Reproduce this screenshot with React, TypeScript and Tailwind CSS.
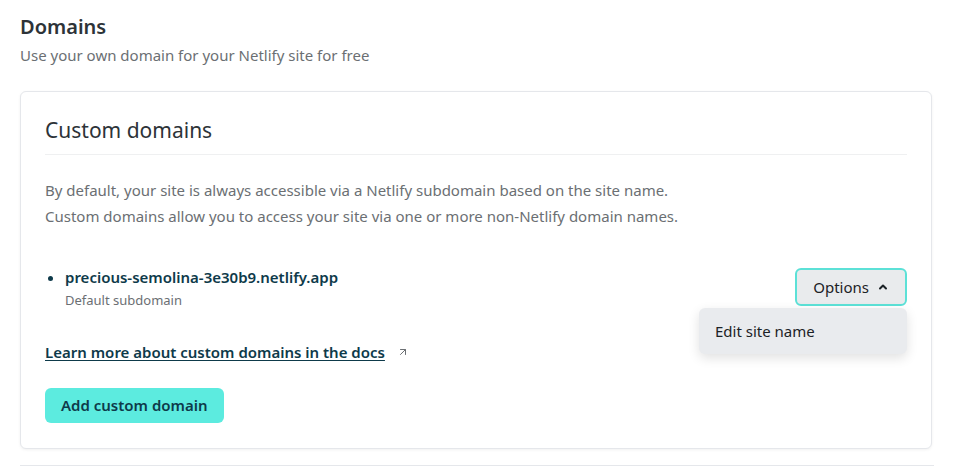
import { ChevronUp, ArrowUpRight } from "lucide-react"

export default function App() {
  return (
    <div
      className="w-[954px] h-[466px] overflow-hidden bg-white px-5 pt-[12px]"
      style={{ fontFamily: '"Noto Sans", "Open Sans", sans-serif' }}
    >
      {/* Section header */}
      <h2 className="text-[20px] leading-[30px] font-semibold text-[#2d3338]">Domains</h2>
      <p className="mt-[1px] text-[15px] leading-[24px] text-[#6b6f73]">
        Use your own domain for your Netlify site for free
      </p>

      {/* Card */}
      <div className="mt-[24px] w-[912px] rounded-[6px] border border-[#e5e7eb] bg-white px-6 pt-[22px] pb-[25px] shadow-[0_1px_3px_rgba(0,0,0,0.06)]">
        <h3 className="text-[21px] leading-[32px] text-[#2d3338]">Custom domains</h3>
        <div className="mt-[8px] border-t border-[#eff0f1]" />

        <div className="mt-[22px] text-[15px] leading-[26px] text-[#6b6f73]">
          <p>By default, your site is always accessible via a Netlify subdomain based on the site name.</p>
          <p>Custom domains allow you to access your site via one or more non-Netlify domain names.</p>
        </div>

        <div className="mt-[36px] flex items-start justify-between">
          <ul className="list-disc pl-5 text-[#0e3a4a]">
            <li className="text-[15px] leading-[24px] font-semibold">
              precious-semolina-3e30b9.netlify.app
              <div className="text-[13px] leading-[22px] font-normal text-[#6b6f73]">Default subdomain</div>
            </li>
          </ul>

          <div className="relative mt-[3px]">
            <button className="flex h-[38px] items-center gap-2 rounded-[6px] border-2 border-[#5ce1d7] bg-[#e9ebed] px-4 text-[15px] text-[#1c2226]">
              Options
              <ChevronUp className="h-3 w-3" strokeWidth={4} />
            </button>
            <div className="absolute right-0 top-[40px] w-[208px] rounded-[6px] bg-[#e9ebee] px-4 py-[11px] text-[15px] leading-[24px] text-[#1c2226] shadow-[0_4px_12px_rgba(0,0,0,0.12)]">
              Edit site name
            </div>
          </div>
        </div>

        <a
          href="#"
          className="mt-[29px] inline-flex items-center gap-3 text-[15px] font-semibold leading-[24px] text-[#0e3a4a]"
        >
          <span className="underline underline-offset-2">Learn more about custom domains in the docs</span>
          <ArrowUpRight className="h-3 w-3 text-[#6b6f73]" strokeWidth={2} />
        </a>

        <div className="mt-[24px]">
          <button className="h-[35px] rounded-[6px] bg-[#5cebdf] px-4 text-[15px] font-semibold text-[#0e3a4a]">
            Add custom domain
          </button>
        </div>
      </div>

      <div className="mt-[16px] h-[4px] border-t border-[#e5e7eb]" />
    </div>
  )
}
